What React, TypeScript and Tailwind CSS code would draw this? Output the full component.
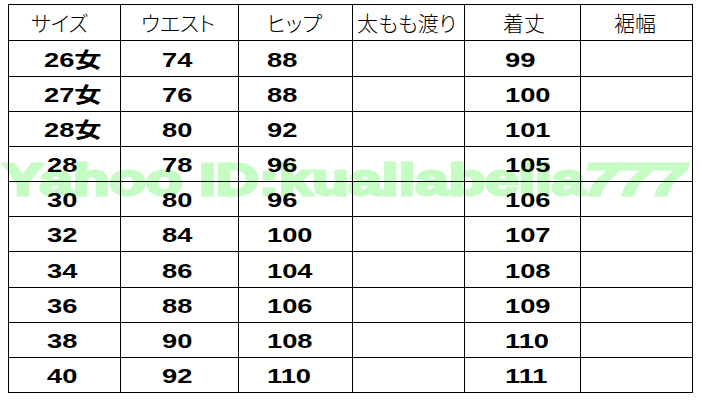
const headers = [
  { label: 'サイズ', pad: 'pl-[22px]' },
  { label: 'ウエスト', pad: 'pl-[20px]' },
  { label: 'ヒップ', pad: 'pl-[28px]' },
  { label: '太もも渡り', pad: 'pl-[4px]' },
  { label: '着丈', pad: 'pl-[38px]' },
  { label: '裾幅', pad: 'pl-[33px]' },
]

const rows = [
  ['26女', '74', '88', '', '99', ''],
  ['27女', '76', '88', '', '100', ''],
  ['28女', '80', '92', '', '101', ''],
  ['28', '78', '96', '', '105', ''],
  ['30', '80', '96', '', '106', ''],
  ['32', '84', '100', '', '107', ''],
  ['34', '86', '104', '', '108', ''],
  ['36', '88', '106', '', '109', ''],
  ['38', '90', '108', '', '110', ''],
  ['40', '92', '110', '', '111', ''],
]

const colPad = ['pl-[38px]', 'pl-[41px]', 'pl-[28px]', 'pl-0', 'pl-[40px]', 'pl-0']
const rowHeights = ['h-[35px]', 'h-[35px]', 'h-[35px]', 'h-[35px]', 'h-[35px]', 'h-[36px]', 'h-[35px]', 'h-[35px]', 'h-[35px]', 'h-[36px]']

export default function App() {
  return (
    <div className="relative w-[702px] h-[400px] bg-white overflow-hidden">
      {/* watermark sits behind the grid lines */}
      <div className="absolute left-[3px] top-[157px] z-0 origin-left scale-x-[1.33] whitespace-nowrap text-[45px] leading-none font-bold text-[#c4fcc4] [-webkit-text-stroke:3px_#c4fcc4] font-['Liberation_Sans',Arial,sans-serif]">
        Yahoo ID:kuallabella<span className="italic">777</span>
      </div>

      <div className="relative z-10 ml-[8px] mt-[4px] w-[685px] border-l border-t border-black">
        <div className="grid grid-cols-[112px_118px_114px_112px_116px_112px] h-[36px]">
          {headers.map((h, i) => (
            <div
              key={i}
              className={`flex items-center border-r border-b border-black ${h.pad} text-[21px] font-light text-black font-['Noto_Sans_CJK_JP',sans-serif] [font-feature-settings:'palt']`}
            >
              {h.label}
            </div>
          ))}
        </div>
        {rows.map((row, r) => (
          <div key={r} className={`grid grid-cols-[112px_118px_114px_112px_116px_112px] ${rowHeights[r]}`}>
            {row.map((cell, c) => (
              <div
                key={c}
                className={`flex items-center pt-[3px] border-r border-b border-black ${c === 0 && cell.includes('女') ? 'pl-[35px]' : colPad[c]}`}
              >
                <span className="inline-block origin-left scale-x-[1.3] whitespace-nowrap text-[21px] font-bold text-black font-['Liberation_Sans','Noto_Sans_CJK_JP',sans-serif]">
                  {cell}
                </span>
              </div>
            ))}
          </div>
        ))}
      </div>
    </div>
  )
}
